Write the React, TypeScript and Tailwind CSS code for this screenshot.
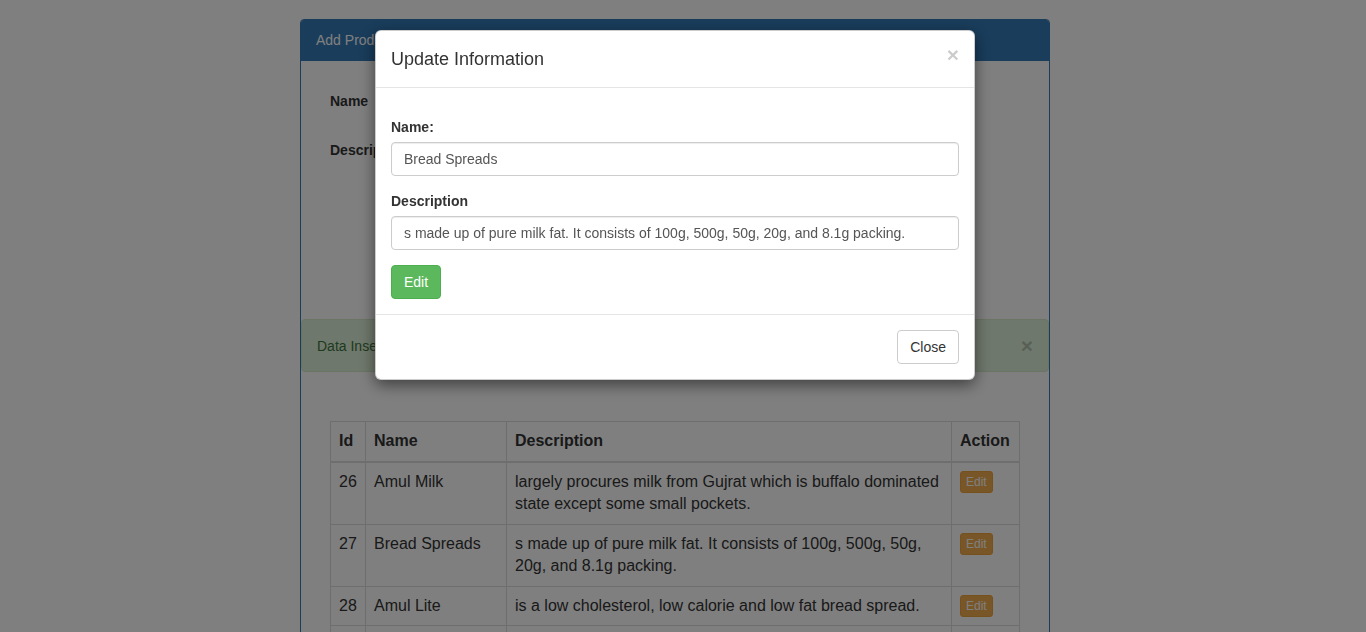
import React from "react";

type Product = { id: number; name: string; description: string };

const products: Product[] = [
  {
    id: 26,
    name: "Amul Milk",
    description:
      "largely procures milk from Gujrat which is buffalo dominated state except some small pockets.",
  },
  {
    id: 27,
    name: "Bread Spreads",
    description:
      "s made up of pure milk fat. It consists of 100g, 500g, 50g, 20g, and 8.1g packing.",
  },
  {
    id: 28,
    name: "Amul Lite",
    description: "is a low cholesterol, low calorie and low fat bread spread.",
  },
  {
    id: 29,
    name: "Amul Cheese",
    description: "is made from pasteurized milk and is available in slices and blocks.",
  },
];

function ProductPanel() {
  return (
    <div className="ml-[300px] mt-[19px] w-[750px] rounded-t-[4px] border border-[#337ab7] bg-white">
      <div className="h-[41px] rounded-t-[3px] bg-[#337ab7] px-[15px] py-[10px] text-[14px] leading-[21px] text-white">
        Add Product
      </div>

      <div className="px-[29px] pt-[30px]">
        <form className="space-y-[15px]">
          <div className="flex items-start gap-[20px]">
            <label className="w-[70px] text-[14px] font-bold leading-[20px]">Name</label>
            <input
              className="h-[34px] w-[480px] rounded-[4px] border border-[#ccc] px-[12px] text-[14px]"
              readOnly
            />
          </div>
          <div className="flex items-start gap-[20px]">
            <label className="w-[70px] text-[14px] font-bold leading-[20px]">Description</label>
            <textarea
              className="h-[90px] w-[480px] rounded-[4px] border border-[#ccc] px-[12px] py-[6px] text-[14px]"
              readOnly
            />
          </div>
          <div className="pl-[90px]">
            <button
              type="button"
              className="h-[34px] rounded-[4px] border border-[#2e6da4] bg-[#337ab7] px-[12px] text-[14px] text-white"
            >
              Submit
            </button>
          </div>
        </form>
      </div>

      <div className="mt-[40px] flex items-center justify-between rounded-[4px] border border-[#d6e9c6] bg-[#dff0d8] px-[15px] py-[15px] text-[14px] leading-[20px] text-[#3c763d]">
        <span>Data Inserted Successfully!</span>
        <span className="text-[21px] font-bold leading-none text-black opacity-20">×</span>
      </div>

      <div className="px-[29px] pb-[20px] pt-[49px]">
        <table className="w-[689px] table-fixed border-collapse text-[16px] leading-[22.5px] text-[#333]">
          <colgroup>
            <col className="w-[35px]" />
            <col className="w-[141px]" />
            <col className="w-[445px]" />
            <col className="w-[68px]" />
          </colgroup>
          <thead>
            <tr>
              {["Id", "Name", "Description", "Action"].map((h) => (
                <th
                  key={h}
                  className="border border-b-2 border-[#ddd] p-[8px] text-left align-bottom font-bold"
                >
                  {h}
                </th>
              ))}
            </tr>
          </thead>
          <tbody>
            {products.map((p) => (
              <tr key={p.id}>
                <td className="border border-[#ddd] p-[8px] align-top">{p.id}</td>
                <td className="border border-[#ddd] p-[8px] align-top">{p.name}</td>
                <td className="border border-[#ddd] p-[8px] align-top">{p.description}</td>
                <td className="border border-[#ddd] p-[8px] align-top">
                  <button
                    type="button"
                    className="align-top rounded-[3px] border border-[#eea236] bg-[#f0ad4e] px-[5px] py-[1px] text-[12px] leading-[18px] text-white"
                  >
                    Edit
                  </button>
                </td>
              </tr>
            ))}
          </tbody>
        </table>
      </div>
    </div>
  );
}

function UpdateModal() {
  return (
    <div className="fixed inset-0 overflow-hidden">
      <div className="ml-[375px] mt-[30px] w-[600px] rounded-[6px] border border-black/20 bg-white shadow-[0_5px_15px_rgba(0,0,0,0.5)]">
        <div className="flex items-start justify-between border-b border-[#e5e5e5] p-[15px]">
          <h4 className="pt-[1px] text-[18px] leading-[25px] text-[#333]">Update Information</h4>
          <button
            type="button"
            className="mt-[-2px] text-[21px] font-bold leading-[21px] text-black opacity-20"
          >
            ×
          </button>
        </div>

        <div className="px-[15px] pb-[15px] pt-[29px]">
          <div className="mb-[15px]">
            <label className="mb-[5px] block text-[14px] font-bold leading-[20px] text-[#333]">
              Name:
            </label>
            <input
              className="block h-[34px] w-full rounded-[4px] border border-[#ccc] px-[12px] text-[14px] text-[#555] shadow-[inset_0_1px_1px_rgba(0,0,0,0.075)] outline-none"
              defaultValue="Bread Spreads"
            />
          </div>
          <div className="mb-[15px]">
            <label className="mb-[5px] block text-[14px] font-bold leading-[20px] text-[#333]">
              Description
            </label>
            <input
              className="block h-[34px] w-full rounded-[4px] border border-[#ccc] px-[12px] text-[14px] text-[#555] shadow-[inset_0_1px_1px_rgba(0,0,0,0.075)] outline-none"
              defaultValue="s made up of pure milk fat. It consists of 100g, 500g, 50g, 20g, and 8.1g packing."
            />
          </div>
          <button
            type="button"
            className="h-[34px] rounded-[4px] border border-[#4cae4c] bg-[#5cb85c] px-[12px] text-[14px] leading-[20px] text-white"
          >
            Edit
          </button>
        </div>

        <div className="flex justify-end border-t border-[#e5e5e5] p-[15px]">
          <button
            type="button"
            className="h-[34px] rounded-[4px] border border-[#ccc] bg-white px-[12px] text-[14px] leading-[20px] text-[#333]"
          >
            Close
          </button>
        </div>
      </div>
    </div>
  );
}

export default function App() {
  return (
    <div className="relative h-[632px] overflow-hidden bg-white font-['Liberation_Sans',Arial,sans-serif] text-[14px] text-[#333]">
      <ProductPanel />
      <div className="fixed inset-0 bg-black/50" />
      <UpdateModal />
    </div>
  );
}
